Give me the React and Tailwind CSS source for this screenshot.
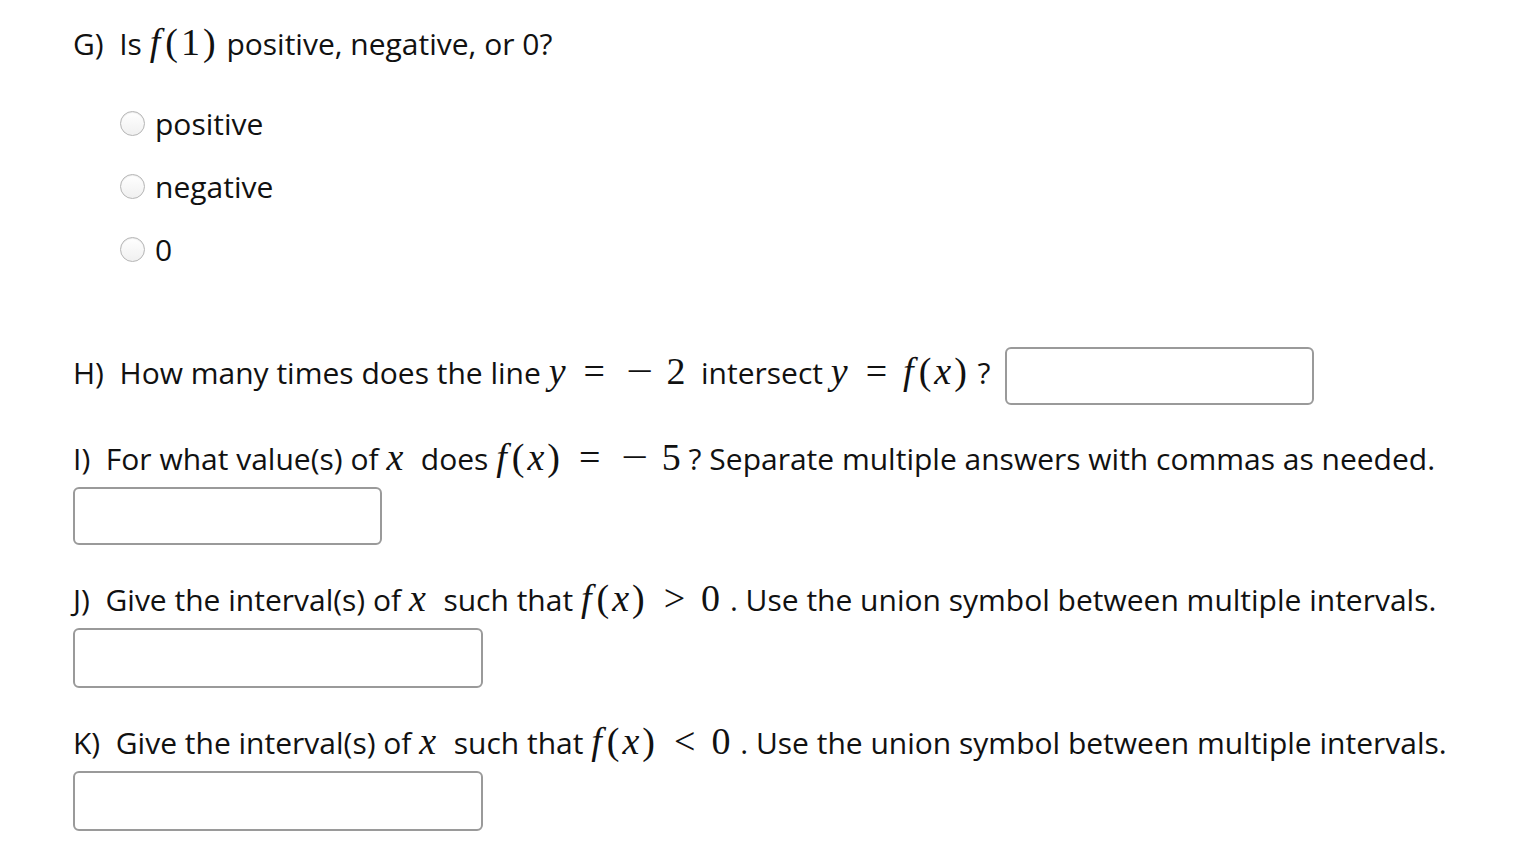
import React from 'react';

const serif = { fontFamily: '"Liberation Serif", "DejaVu Serif", serif' };

const M = ({ children, italic = true }) => (
  <span className={`text-[38px] tracking-[2px] ${italic ? 'italic' : ''}`} style={serif}>
    {children}
  </span>
);

const Rel = ({ children }) => (
  <span className="text-[38px] mx-[16px]" style={serif}>
    {children}
  </span>
);

const Neg = ({ n }) => (
  <span className="text-[38px] ml-[8px]" style={serif}>
    <span className="inline-block scale-x-125 mr-[16px]">−</span>
    {n}
  </span>
);

const Fx = ({ arg = 'x', argItalic = true }) => (
  <span className="text-[38px] tracking-[3px]" style={serif}>
    <span className="italic pr-[2px]">f</span>(<span className={argItalic ? 'italic' : ''}>{arg}</span>)
  </span>
);

const Input = ({ w, h = 'h-[60px]' }) => (
  <input
    type="text"
    className={`${w} ${h} rounded-md border-2 border-[#9a9a9a] bg-white outline-none`}
  />
);

const Radio = ({ label }) => (
  <label className="flex items-center h-[63px]">
    <span className="w-[25px] h-[25px] rounded-full border border-[#b5b5b5] bg-gradient-to-b from-white to-[#f0f0f0] shadow-[inset_0_1px_1px_rgba(0,0,0,0.08)] mr-[10px]" />
    <span>{label}</span>
  </label>
);

export default function App() {
  return (
    <div
      className="min-h-screen bg-white text-[#111] text-[30px] leading-[44px] pl-[73px] pt-[20px]"
      style={{ fontFamily: '"Open Sans", "Noto Sans", sans-serif' }}
    >
      <div className="h-[44px] whitespace-nowrap">
        G)&nbsp; Is <Fx arg="1" argItalic={false} /> positive, negative, or 0?
      </div>

      <div className="pl-[47px] mt-[28px] flex flex-col">
        <Radio label="positive" />
        <Radio label="negative" />
        <Radio label="0" />
      </div>

      <div className="mt-[66px] flex items-center h-[58px] whitespace-nowrap">
        <span className="h-[44px] mb-[10px]">
          H)&nbsp; How many times does the line <M>y</M><Rel>=</Rel><Neg n="2" />&nbsp; intersect <M>y</M><Rel>=</Rel><Fx /> ?
        </span>
        <span className="w-[14px]" />
        <Input w="w-[309px]" h="h-[58px]" />
      </div>

      <div className="mt-[30px] h-[44px] whitespace-nowrap">
        I)&nbsp; For what value(s) of <M>x</M>&nbsp; does <Fx /><Rel>=</Rel><Neg n="5" /> ? Separate multiple answers with commas as needed.
      </div>
      <div className="mt-[8px] flex">
        <Input w="w-[309px]" h="h-[58px]" />
      </div>

      <div className="mt-[31px] h-[44px] whitespace-nowrap">
        J)&nbsp; Give the interval(s) of <M>x</M>&nbsp; such that <Fx /><Rel>&gt;</Rel><M italic={false}>0</M>&nbsp;. Use the union symbol between multiple intervals.
      </div>
      <div className="mt-[8px] flex">
        <Input w="w-[410px]" />
      </div>

      <div className="mt-[31px] h-[44px] whitespace-nowrap">
        K)&nbsp; Give the interval(s) of <M>x</M>&nbsp; such that <Fx /><Rel>&lt;</Rel><M italic={false}>0</M>&nbsp;. Use the union symbol between multiple intervals.
      </div>
      <div className="mt-[8px] flex">
        <Input w="w-[410px]" />
      </div>
    </div>
  );
}
